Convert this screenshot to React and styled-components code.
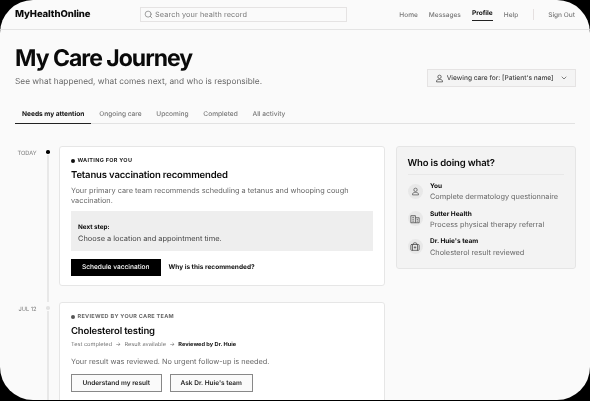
import React from "react";
import styled, { createGlobalStyle } from "styled-components";
import { Search, ChevronDown, BriefcaseMedical } from "lucide-react";

const Global = createGlobalStyle`
  html, body { margin: 0; padding: 0; background: #000; }
  body { font-family: Inter, "Liberation Sans", sans-serif; text-rendering: geometricPrecision; }
  * { box-sizing: border-box; }
`;

const Frame = styled.div`
  width: 590px; height: 400px; background: #fafafa; border-radius: 33px;
  overflow: hidden; color: #0a0a0a; display: flex; flex-direction: column;
  filter: blur(0.25px);
`;
const TopBar = styled.header`
  height: 30px; flex: none; display: flex; align-items: center; padding: 0 15px;
  border-bottom: 1px solid #e4e4e4;
`;
const Logo = styled.div`font-size: 9.55px; font-weight: 800; letter-spacing: -0.1px; width: 125px;`;
const SearchBox = styled.div`
  width: 207px; height: 15px; border: 1px solid #e5e3e3; display: flex; align-items: center; gap: 2.5px;
  padding-left: 2.5px; color: #777; font-size: 7.3px; letter-spacing: 0.1px;
`;
const Nav = styled.nav`margin-left: auto; display: flex; align-items: center; gap: 11px; height: 100%;`;
const NavLink = styled.a`
  font-size: 6.55px; font-weight: ${p => (p.$active ? 700 : 500)}; color: ${p => (p.$active ? "#111" : "#777")};
  ${p => p.$active && `padding: 3px 0; border-bottom: 1px solid #222; margin-top: -3px;`}
`;
const NavDivider = styled.span`width: 1px; height: 11px; background: #e5e0e0; margin: 0 3.5px;`;
const Main = styled.main`padding: 0 15px; display: flex; flex-direction: column;`;
const Heading = styled.div`display: flex; justify-content: space-between; align-items: flex-end; padding-top: 13px;`;
const Title = styled.h1`margin: 0; font-size: 23px; line-height: 30px; font-weight: 700; letter-spacing: -1px;`;
const Subtitle = styled.p`margin: 2.5px 0 0.5px; font-size: 8.3px; line-height: 12px; color: #666;`;
const CareSelect = styled.div`
  width: 149px; height: 18px; border: 1px solid #e5e3e3; background: #f4f4f4; display: flex; align-items: center;
  padding: 0 7px; font-size: 6.6px; font-weight: 500; color: #444; justify-content: space-between; margin: 0 -0.7px 1px 0; white-space: nowrap;
`;
const CareLabel = styled.span`display: flex; align-items: center; gap: 3px;`;
const Tabs = styled.div`
  display: flex; gap: 14.7px; margin-top: 21px; border-bottom: 1px solid #e2e2e2; height: 15px; padding-left: 7px; position: relative;
`;
const Tab = styled.div`
  font-size: 6.6px; font-weight: ${p => (p.$active ? 700 : 500)}; color: ${p => (p.$active ? "#111" : "#777")};
  line-height: 10px; height: 15px; position: relative;
  ${p => p.$active && `&::after { content: ""; position: absolute; left: -7px; right: -7px; bottom: 0; height: 1px; background: #222; }`}
`;
const Columns = styled.div`display: grid; grid-template-columns: 370px 179.5px; column-gap: 11px; padding-top: 22px;`;
const Timeline = styled.div`display: flex; flex-direction: column;`;
const Entry = styled.section`display: flex;`;
const DateLabel = styled.div`width: 22px; flex: none; font-size: 5.7px; line-height: 8px; color: #777; padding: 4px 0.5px 0 0; white-space: nowrap; display: flex; justify-content: flex-end;`;
const Rail = styled.div`width: 22px; flex: none; display: flex; flex-direction: column; align-items: center; padding-top: 4px;`;
const Dot = styled.span`width: 3.5px; height: 3.5px; border-radius: 50%; background: ${p => p.$c}; flex: none;`;
const RailLine = styled.span`width: 1.5px; flex: 1; background: #e8e8e8; margin-top: 1px;`;
const CardWrap = styled.div`flex: 1; padding-bottom: 16px;`;
const Card = styled.article`
  background: #fff; border: 1px solid #e6e6e6; border-radius: 3px; padding: 9.5px 11px 10px; height: ${p => p.$h}px;
`;
const Status = styled.div`
  display: flex; align-items: center; gap: 2.5px; font-size: 5.5px; line-height: 8px; font-weight: 700; letter-spacing: 0.3px; color: ${p => p.$c};
`;
const StatusDot = styled.span`width: 4px; height: 4px; border-radius: 50%; background: ${p => p.$c};`;
const CardTitle = styled.h2`margin: 4.5px 0 0; font-size: 9.5px; line-height: 14px; font-weight: 600; letter-spacing: -0.15px;`;
const Body = styled.p`margin: ${p => p.$m}; font-size: 7.33px; line-height: 10px; color: #666;`;
const NextStep = styled.div`margin-top: 5px; background: #eeeeee; height: 40px; padding: 11.2px 7px 0;`;
const NextLabel = styled.div`font-size: 6.3px; line-height: 9px; font-weight: 700;`;
const NextText = styled.div`margin-top: 2.7px; font-size: 7.43px; line-height: 10px; color: #444;`;
const Actions = styled.div`display: flex; align-items: center; margin-top: ${p => p.$m}px; gap: 8px;`;
const Primary = styled.button`
  width: 89.5px; height: 17px; background: #000; color: #fff; border: 0; padding: 0; font: 500 6.6px Inter, sans-serif; text-rendering: geometricPrecision;
`;
const TextLink = styled.a`font-size: 6.5px; font-weight: 700; color: #111;`;
const Secondary = styled.button`
  width: ${p => p.$w}px; height: 18px; background: #fafafa; color: #222; border: 1px solid #888; padding: 0; font: 600 6.5px Inter, sans-serif; text-rendering: geometricPrecision;
`;
const Crumbs = styled.div`margin-top: 2.3px; display: flex; gap: 3.5px; font-size: 5.65px; line-height: 8px; color: #777;`;
const CrumbStrong = styled.span`font-weight: 700; color: #111;`;
const Side = styled.aside`
  height: 122.6px; background: #f3f3f3; border: 1px solid #e5e5e5; border-radius: 3px; padding: 9.7px 10.5px 0;
`;
const SideTitle = styled.h3`margin: 0; font-size: 9.5px; line-height: 14px; font-weight: 600; letter-spacing: -0.15px; padding-bottom: 3.5px; border-bottom: 1px solid #e8e8e8;`;
const Who = styled.div`display: flex; gap: 7.5px; margin-top: ${p => p.$m}px;`;
const WhoIcon = styled.span`
  width: 15px; height: 15px; border-radius: 50%; background: #e8e8e8; flex: none; display: flex; align-items: center; justify-content: center; color: #555; margin-top: 1.7px;
`;
const WhoName = styled.div`font-size: 6.5px; line-height: 9px; font-weight: 700;`;
const WhoDesc = styled.div`font-size: 7.33px; line-height: 11px; color: #666; margin-top: 0.4px; white-space: nowrap;`;

const PersonIcon = ({ size = 9 }) => (
  <svg width={size} height={size} viewBox="0 0 24 24" fill="none" stroke="currentColor" strokeWidth="2">
    <circle cx="12" cy="7.5" r="4.5" />
    <path d="M4 21v-2.5c0-2.2 3.5-4 8-4s8 1.8 8 4V21z" />
  </svg>
);
const BuildingIcon = () => (
  <svg width="10" height="10" viewBox="0 0 24 24" fill="none" stroke="currentColor" strokeWidth="2">
    <path d="M2 21V4h11v17M13 9h9v12H2" />
    <path d="M5.5 8h4M5.5 12.5h4M5.5 17h4M16 13h3M16 17h3" />
  </svg>
);

export default function App() {
  return (
    <>
      <Global />
      <Frame>
        <TopBar>
          <Logo>MyHealthOnline</Logo>
          <SearchBox><Search size={9} strokeWidth={1.8} />Search your health record</SearchBox>
          <Nav>
            <NavLink>Home</NavLink>
            <NavLink>Messages</NavLink>
            <NavLink $active>Profile</NavLink>
            <NavLink>Help</NavLink>
            <NavDivider />
            <NavLink>Sign Out</NavLink>
          </Nav>
        </TopBar>
        <Main>
          <Heading>
            <div>
              <Title>My Care Journey</Title>
              <Subtitle>See what happened, what comes next, and who is responsible.</Subtitle>
            </div>
            <CareSelect>
              <CareLabel><PersonIcon />Viewing care for: [Patient's name]</CareLabel>
              <ChevronDown size={8} />
            </CareSelect>
          </Heading>
          <Tabs>
            <Tab $active>Needs my attention</Tab>
            <Tab>Ongoing care</Tab>
            <Tab>Upcoming</Tab>
            <Tab>Completed</Tab>
            <Tab>All activity</Tab>
          </Tabs>
          <Columns>
            <Timeline>
              <Entry>
                <DateLabel>TODAY</DateLabel>
                <Rail><Dot $c="#000" /><RailLine /></Rail>
                <CardWrap>
                  <Card $h={140}>
                    <Status $c="#222"><StatusDot $c="#111" />WAITING FOR YOU</Status>
                    <CardTitle>Tetanus vaccination recommended</CardTitle>
                    <Body $m="3.4px 0 0">Your primary care team recommends scheduling a tetanus and whooping cough vaccination.</Body>
                    <NextStep>
                      <NextLabel>Next step:</NextLabel>
                      <NextText>Choose a location and appointment time.</NextText>
                    </NextStep>
                    <Actions $m={7.5}>
                      <Primary>Schedule vaccination</Primary>
                      <TextLink>Why is this recommended?</TextLink>
                    </Actions>
                  </Card>
                </CardWrap>
              </Entry>
              <Entry>
                <DateLabel>JUL 12</DateLabel>
                <Rail><Dot $c="#e2e2e2" /><RailLine /></Rail>
                <CardWrap>
                  <Card $h={120}>
                    <Status $c="#666"><StatusDot $c="#555" />REVIEWED BY YOUR CARE TEAM</Status>
                    <CardTitle>Cholesterol testing</CardTitle>
                    <Crumbs>
                      <span>Test completed</span><span>→</span><span>Result available</span><span>→</span>
                      <CrumbStrong>Reviewed by Dr. Huie</CrumbStrong>
                    </Crumbs>
                    <Body $m="7.4px 0 0">Your result was reviewed. No urgent follow-up is needed.</Body>
                    <Actions $m={7.3}>
                      <Secondary $w={90.5}>Understand my result</Secondary>
                      <Secondary $w={83.5}>Ask Dr. Huie's team</Secondary>
                    </Actions>
                  </Card>
                </CardWrap>
              </Entry>
            </Timeline>
            <Side>
              <SideTitle>Who is doing what?</SideTitle>
              <Who $m={6.8}>
                <WhoIcon><PersonIcon /></WhoIcon>
                <div><WhoName>You</WhoName><WhoDesc>Complete dermatology questionnaire</WhoDesc></div>
              </Who>
              <Who $m={7.3}>
                <WhoIcon><BuildingIcon /></WhoIcon>
                <div><WhoName>Sutter Health</WhoName><WhoDesc>Process physical therapy referral</WhoDesc></div>
              </Who>
              <Who $m={7.3}>
                <WhoIcon><BriefcaseMedical size={10} strokeWidth={2} /></WhoIcon>
                <div><WhoName>Dr. Huie's team</WhoName><WhoDesc>Cholesterol result reviewed</WhoDesc></div>
              </Who>
            </Side>
          </Columns>
        </Main>
      </Frame>
    </>
  );
}
